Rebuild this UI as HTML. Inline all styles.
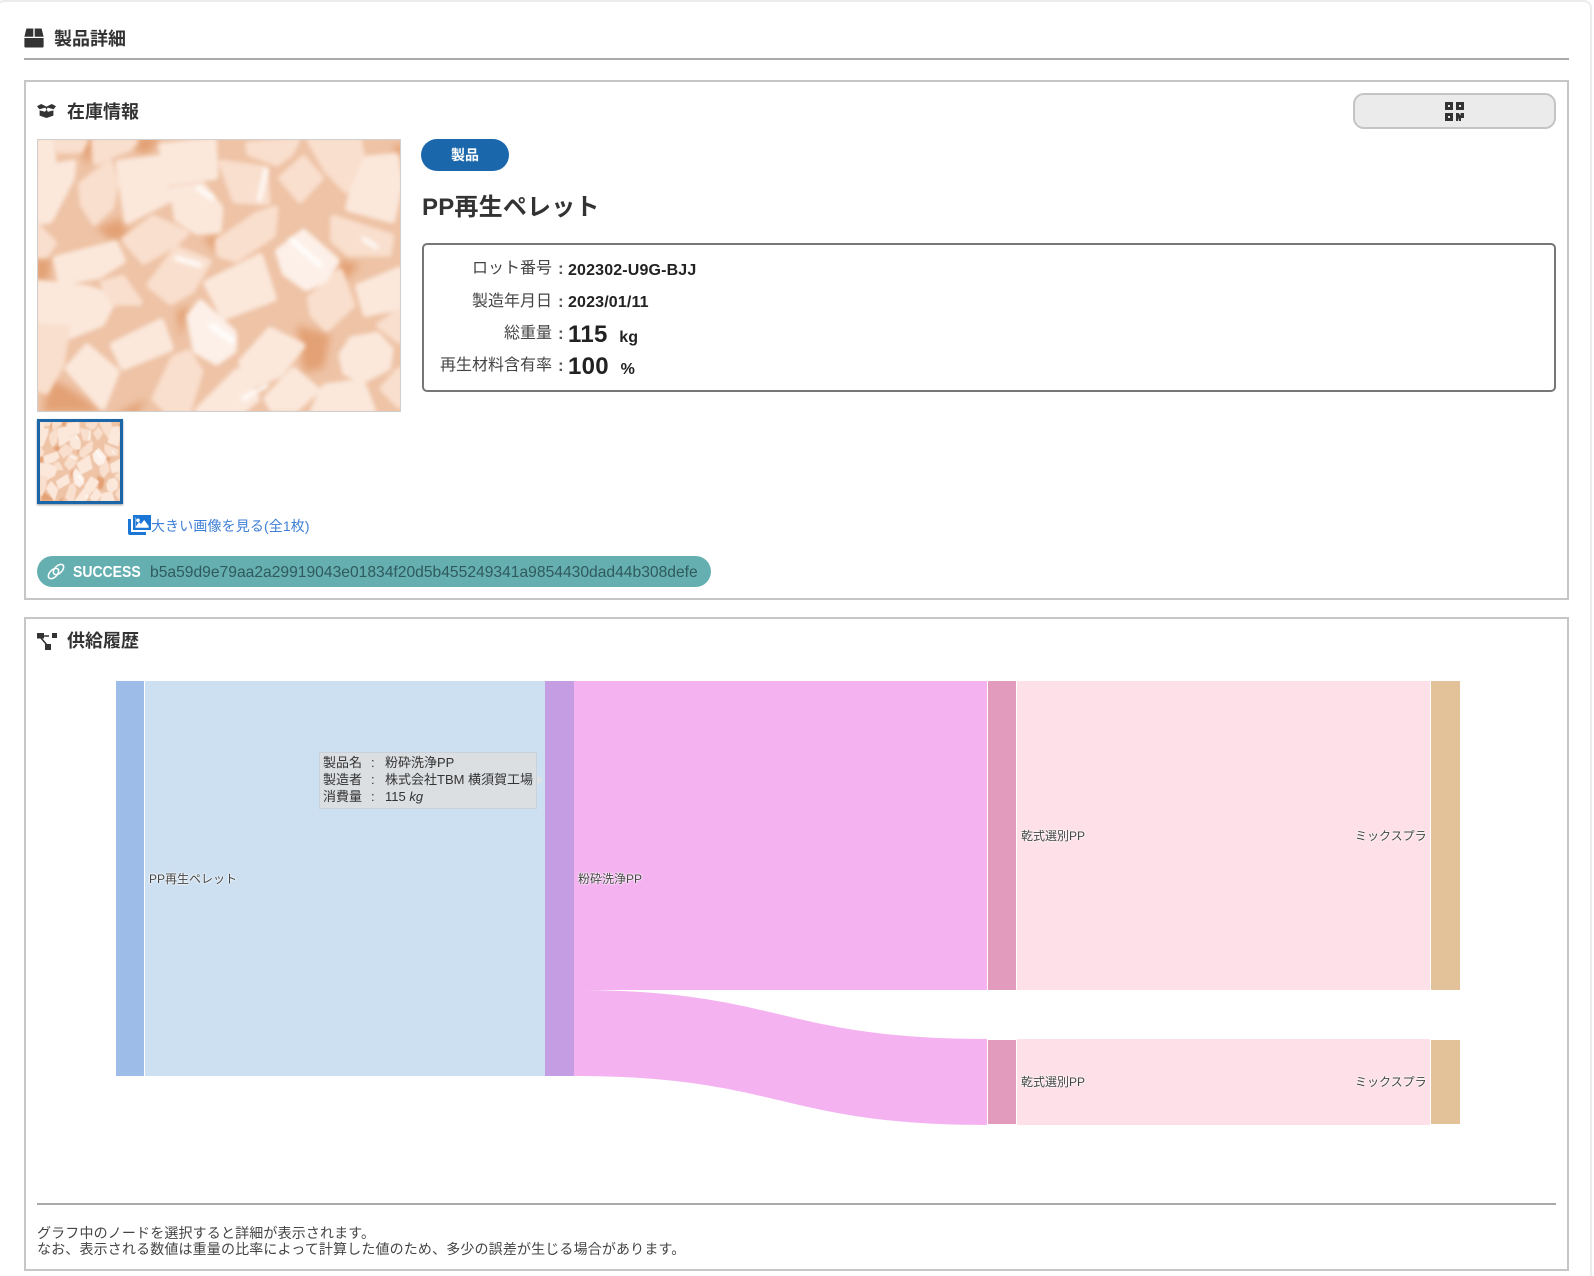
<!DOCTYPE html>
<html lang="ja">
<head>
<meta charset="utf-8">
<title>製品詳細</title>
<style>
html,body{margin:0;padding:0;background:#fff;width:1594px;height:1276px;overflow:hidden}
body{font-family:"Liberation Sans","Noto Sans CJK JP",sans-serif;color:#333}
#p{position:relative;width:1594px;height:1276px;overflow:hidden;filter:blur(.3px)}
.a{position:absolute;white-space:nowrap}
.card{position:absolute;left:-4px;top:0;width:1596px;height:1290px;border:2px solid #ececec;border-radius:8px;box-sizing:border-box}
.panel{position:absolute;left:24px;width:1545px;box-sizing:border-box;border:2px solid #c6c6c6}
.h{font-size:18px;font-weight:700;line-height:24px;color:#333}
.lbl{position:absolute;left:430px;width:122px;text-align:right;font-size:16px;line-height:24px;color:#444;white-space:nowrap}
.col{position:absolute;left:558px;font-size:17px;font-weight:700;line-height:24px;color:#555}
.val{position:absolute;left:568px;font-weight:700;font-size:16px;line-height:24px;color:#222;white-space:nowrap;letter-spacing:.15px}
.big{font-size:24px;letter-spacing:.3px}
.unit{font-size:16px;margin-left:7px}
.sl{position:absolute;font-size:12px;line-height:16px;color:#444;white-space:nowrap;text-shadow:0 0 2px #fff,0 0 2px #fff,0 0 1px #fff}
.tt{position:absolute;left:319px;top:752px;width:218px;height:57px;box-sizing:border-box;background:#dcdfe2;border:1px solid #c9d2da;font-size:13px;line-height:17px;color:#333}
.tt div{position:absolute;left:3px;white-space:nowrap}
.tt span{position:absolute;top:0}
</style>
</head>
<body>
<svg width="0" height="0" style="position:absolute">
  <defs>
    <filter id="b" x="-5%" y="-5%" width="110%" height="110%"><feGaussianBlur stdDeviation="6"/></filter>
    <filter id="h" x="-30%" y="-30%" width="160%" height="160%"><feGaussianBlur stdDeviation="12"/></filter>
    <filter id="w" x="-40%" y="-40%" width="180%" height="180%"><feGaussianBlur stdDeviation="7"/></filter>
    <symbol id="pel" viewBox="22 13 1090 817" preserveAspectRatio="none">
      <rect x="0" y="0" width="1130" height="840" fill="#eec3a6"/>
      <g fill="#e3a175" filter="url(#h)">
        <path d="M320 5h70l-30 50h-40zM170 5h30l-25 90-20-40zM1120 20v55l-35-30zM200 280l70-30 30 50-50 20zM15 370l50 0-10 70H15zM440 530l40-20-30 100zM60 730l60 30 100 70H40zM520 310l40-15 0 60zM800 570l100 30-20 100-60 10zM250 840l100-50-30 50zM920 370l70 20-50 50z"/>
      </g>
      <g filter="url(#b)" stroke-linejoin="round" stroke-width="20">
        <g fill="#fbe8db" stroke="#fbe8db">
          <path d="M27 18h38l5 62-43 5z"/>
          <path d="M395 35l155-17 5 107-130 18z"/>
          <path d="M267 85l128-15 20 125-122 62z"/>
          <path d="M27 105l103-20-5 45-65 125-33 5z"/>
          <path d="M430 165l88-12 52 67-5 65-63 5-60-40z"/>
          <path d="M990 75l105-10 12 85-22 105-130-35z"/>
          <path d="M80 372l175-45 23 50-72 45-112 18z"/>
          <path d="M530 445l160-80 40 125-148 55z"/>
          <path d="M635 680l85-95 95 47-67 85-103 43z"/>
          <path d="M250 630l143-70 28 79-140 56z"/>
          <path d="M115 700l57-65 88 75-42 105z"/>
          <path d="M505 825l115-115 60 80-43 35z"/>
          <path d="M710 790l80-85 70 60-63 55-70 0z"/>
          <path d="M935 660l30-47 75-13 40 43-8 53-73 38-53-23z"/>
          <path d="M985 455l122-50v110l-100 20z"/>
          <path d="M850 825l34-70 110-15 33 85z"/>
          <path d="M27 445l143 15 85 27-40 77-103 41-85-50z"/>
        </g>
        <g fill="#f9dfce" stroke="#f9dfce">
          <path d="M195 18h120l-18 22-50 20-47 22z"/>
          <path d="M155 150l85-65 16 65-12 65-50 47-34-55z"/>
          <path d="M575 85l128 18 8 98-95-5z"/>
          <path d="M655 30l145-12-20 37-40 30-80-30z"/>
          <path d="M755 130l65-58 50 58-60 65z"/>
          <path d="M840 18h145l8 42-45 105-58-60z"/>
          <path d="M910 250l172 55-8 50-118 0-46-40z"/>
          <path d="M285 315l85-65 98 44-34 33-92 52z"/>
          <path d="M565 320l117-80 53-18-8 78-108 73-50-15z"/>
          <path d="M840 490l88-78 37 98-75 70-42-42z"/>
          <path d="M360 450l80-108 95 38-50 85-63 35z"/>
          <path d="M27 280l45 45-25 35H27z"/>
          <path d="M27 575l85 4-18 108-45 80-22-8z"/>
          <path d="M375 790l57-120 43-17 35 55-35 117h-63z"/>
          <path d="M220 445l58-15 50 72-75 0z"/>
          <path d="M1048 570l59-40v85z"/>
          <path d="M1058 760l49-55v105z"/>
          <path d="M85 18h80l-15 28-60 0z"/>
        </g>
        <path fill="#fdf0e8" stroke="#fdf0e8" d="M480 545l32-42 98 90 0 52-50 35-62-35z"/>
        <path fill="#fdf0e8" stroke="#fdf0e8" d="M745 350l75-58 98 86-35 55-55 25-63-45z"/>
      </g>
      <g stroke="#fff" stroke-linecap="round" fill="none" filter="url(#w)">
        <path d="M545 572l62 45" stroke-width="16"/>
        <path d="M688 195l20-90" stroke-width="12"/>
        <path d="M785 315l85 75" stroke-width="14"/>
        <path d="M1000 312l38 24" stroke-width="12"/>
        <path d="M505 160l40 30" stroke-width="12"/>
        <path d="M440 370l70 20" stroke-width="14"/>
        <path d="M640 790l70-40" stroke-width="12"/>
      </g>
    </symbol>
  </defs>
</svg>

<div id="p">
<div class="card"></div>

<!-- page heading -->
<svg class="a" style="left:24px;top:28px" width="20" height="20" viewBox="0 0 20 20"><path fill="#333" d="M2.4 .5h6.900v8.300H.4zM10.700 .5h6.900l2 8.300h-8.900zM.4 10h19.200v8.200a1.300 1.300 0 0 1-1.300 1.300H1.700a1.300 1.300 0 0 1-1.300-1.300z"/></svg>
<div class="a h" style="left:54px;top:27px">製品詳細</div>
<div class="a" style="left:24px;top:58px;width:1545px;height:2px;background:#a9a9a9"></div>

<!-- panel 1 -->
<div class="panel" style="top:80px;height:520px"></div>
<svg class="a" style="left:37px;top:104px" width="19" height="14" viewBox="0 0 19 14"><path fill="#333" d="M0 2.200 4.200 0 9.500 2.600 14.800 0 19 2.200 16.600 5.200 10.600 3.600 9.500 6 8.400 3.600 2.400 5.200zM2.600 6.400 8 7.800 9.500 5.800 11 7.800 16.400 6.400V11.600L9.500 14 2.600 11.600z"/></svg>
<div class="a h" style="left:67px;top:100px">在庫情報</div>

<div class="a" style="left:1353px;top:93px;width:203px;height:36px;box-sizing:border-box;background:#ebebeb;border:2px solid #c4c4c4;border-radius:11px"></div>
<svg class="a" style="left:1445px;top:102px" width="19" height="19" viewBox="0 0 19 19"><path fill="#333" fill-rule="evenodd" d="M0 0h8v8H0zM3 3v2h2V3zM11 0h8v8h-8zM14 3v2h2V3zM0 11h8v8H0zM3 14v2h2v-2zM11 11h2.500l2 2.500V11H19v5h-3v3h-2v-3.500L13 19h-2z"/></svg>

<svg class="a" style="left:37px;top:139px;outline:1px solid #cfcfcf;outline-offset:-1px" width="364" height="273"><use href="#pel" width="364" height="273"/></svg>
<svg class="a" style="left:37px;top:419px;border:3px solid #1a66a8;box-shadow:0 1px 2px #999;box-sizing:border-box" width="86" height="85"><use href="#pel" width="80" height="79"/></svg>

<svg class="a" style="left:128px;top:515px" width="23" height="20" viewBox="0 0 23 20"><path fill="#1b76d6" fill-rule="evenodd" d="M5 0h18v15H5zM7.500 2.300v10.400h13.200V11l-4.500-6-3.300 4-2-2-3 4.500V2.300zM10 3.500a1.800 1.800 0 1 0 0 3.600 1.800 1.800 0 0 0 0-3.600z"/><path fill="#1b76d6" d="M0 4h3v13h15v3H2a2 2 0 0 1-2-2z"/></svg>
<div class="a" style="left:151px;top:514px;font-size:14px;line-height:24px;color:#3f80d6;letter-spacing:.12px">大きい画像を見る(全1枚)</div>

<div class="a" style="left:37px;top:556px;width:674px;height:31px;border-radius:16px;background:#65afb1"></div>
<svg class="a" style="left:46px;top:562px" width="20" height="19" viewBox="0 0 20 19"><g fill="none" stroke="#fff" stroke-width="1.500"><ellipse cx="7.500" cy="11.500" rx="6.300" ry="3.700" transform="rotate(-45 7.500 11.500)"/><ellipse cx="12.500" cy="7.500" rx="6.300" ry="3.700" transform="rotate(-45 12.500 7.500)"/></g></svg>
<div class="a" style="left:73px;top:561px;font-size:16px;font-weight:700;line-height:24px;color:#fff;transform:scaleX(.875);transform-origin:left center">SUCCESS</div>
<div class="a" style="left:150px;top:561px;font-size:16px;line-height:24px;color:#2f5a5e;transform:scaleX(.977);transform-origin:left center">b5a59d9e79aa2a29919043e01834f20d5b455249341a9854430dad44b308defe</div>

<div class="a" style="left:421px;top:139px;width:88px;height:32px;border-radius:16px;background:#1a67ab;color:#fff;font-size:14px;font-weight:700;line-height:32px;text-align:center">製品</div>
<div class="a" style="left:422px;top:192px;font-size:24px;font-weight:700;line-height:32px;color:#333;letter-spacing:.2px">PP再生ペレット</div>

<div class="a" style="left:422px;top:243px;width:1134px;height:149px;box-sizing:border-box;border:2px solid #777;border-radius:5px"></div>
<div class="lbl" style="top:257px">ロット番号</div><div class="col" style="top:257px">:</div><div class="val" style="top:257px;margin-top:2px">202302-U9G-BJJ</div>
<div class="lbl" style="top:290px">製造年月日</div><div class="col" style="top:290px">:</div><div class="val" style="top:291px">2023/01/11</div>
<div class="lbl" style="top:322px">総重量</div><div class="col" style="top:322px">:</div><div class="val" style="top:323px"><span class="big">115</span> <span class="unit">kg</span></div>
<div class="lbl" style="top:354px">再生材料含有率</div><div class="col" style="top:354px">:</div><div class="val" style="top:355px"><span class="big">100</span> <span class="unit">%</span></div>

<!-- panel 2 -->
<div class="panel" style="top:617px;height:654px"></div>
<svg class="a" style="left:37px;top:633px" width="20" height="17" viewBox="0 0 20 17"><path fill="#333" d="M0 0h7v5.500H0zM15 0h5v5h-5zM8 11h6v6H8z"/><path fill="none" stroke="#333" stroke-width="1.600" d="M6 3h6M4 5l6 7"/></svg>
<div class="a h" style="left:67px;top:629px">供給履歴</div>

<!-- sankey -->
<svg class="a" style="left:0;top:0" width="1594" height="1276">
  <path d="M145 681H545V1076H145z" fill="#cde0f1"/>
  <path d="M574 681H987V990H574z" fill="#f4b2f0"/>
  <path d="M574 990C780 990 780 1039 987 1039V1125C780 1125 780 1076 574 1076z" fill="#f4b2f0"/>
  <path d="M1017 681H1430V990H1017zM1017 1039H1430V1125H1017z" fill="#fde0e8"/>
  <rect x="116" y="681" width="28" height="395" fill="#9dbde8"/>
  <rect x="545" y="681" width="29" height="395" fill="#c59de2"/>
  <rect x="988" y="681" width="28" height="309" fill="#e39bbd"/>
  <rect x="988" y="1040" width="28" height="84" fill="#e39bbd"/>
  <rect x="1431" y="681" width="29" height="309" fill="#e3c29a"/>
  <rect x="1431" y="1040" width="29" height="84" fill="#e3c29a"/>
</svg>
<div class="sl" style="left:149px;top:871px">PP再生ペレット</div>
<div class="sl" style="left:578px;top:871px">粉砕洗浄PP</div>
<div class="sl" style="left:1021px;top:828px">乾式選別PP</div>
<div class="sl" style="left:1021px;top:1074px">乾式選別PP</div>
<div class="sl" style="left:1355px;top:828px">ミックスプラ</div>
<div class="sl" style="left:1355px;top:1074px">ミックスプラ</div>

<div class="tt">
  <div style="top:1px">製品名<span style="left:48px">:</span><span style="left:62px">粉砕洗浄PP</span></div>
  <div style="top:18px">製造者<span style="left:48px">:</span><span style="left:62px">株式会社TBM 横須賀工場</span></div>
  <div style="top:35px">消費量<span style="left:48px">:</span><span style="left:62px">115 <i>kg</i></span></div>
</div>
<div class="a" style="left:537px;top:774px;width:0;height:0;border-left:6px solid #dce2e8;border-top:6px solid transparent;border-bottom:6px solid transparent"></div>

<div class="a" style="left:37px;top:1203px;width:1519px;height:2px;background:#a9a9a9"></div>
<div class="a" style="left:37px;top:1225px;font-size:14px;line-height:16px;color:#444;letter-spacing:.15px">グラフ中のノードを選択すると詳細が表示されます。<br>なお、表示される数値は重量の比率によって計算した値のため、多少の誤差が生じる場合があります。</div>
</div>
</body>
</html>
